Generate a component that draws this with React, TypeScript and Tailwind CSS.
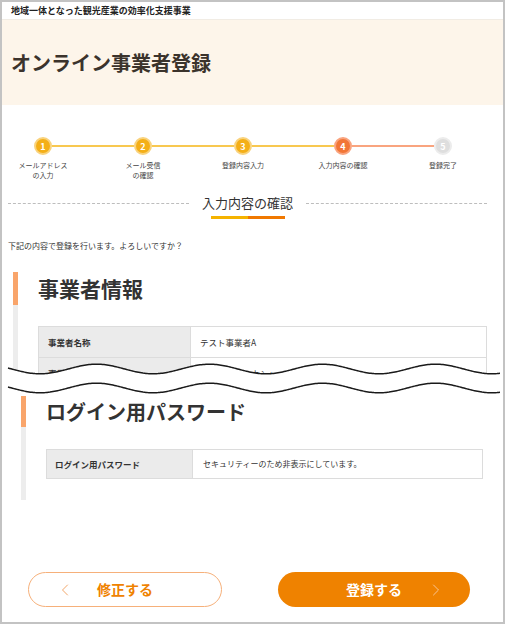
import React from 'react';
import { ChevronLeft, ChevronRight } from 'lucide-react';

const steps = [
  { n: 1, label: ['メールアドレス', 'の入力'], state: 'done' },
  { n: 2, label: ['メール受信', 'の確認'], state: 'done' },
  { n: 3, label: ['登録内容入力'], state: 'done' },
  { n: 4, label: ['入力内容の確認'], state: 'current' },
  { n: 5, label: ['登録完了'], state: 'todo' },
];

// line colour between step i and i+1
const segColor = (i: number) => (i >= 3 ? 'bg-[#f9a47f]' : 'bg-[#f8c850]');

const wavePoints = (c: number, a: number) => {
  const pts: string[] = [];
  for (let x = 8; x <= 501; x += 1.5) {
    const y = c - a * Math.cos((2 * Math.PI * (x - 96.5)) / 113);
    pts.push(`${x.toFixed(1)},${y.toFixed(2)}`);
  }
  return pts;
};

const BreakLines: React.FC = () => {
  const top = wavePoints(369, 4.8);
  const bottom = wavePoints(388, 4.8);
  const fill = `M${top.join(' L')} L${[...bottom].reverse().join(' L')} Z`;
  return (
    <svg
      className="relative block -mt-[17px] w-[501px] h-[35px]"
      viewBox="2 361 501 35"
      fill="none"
    >
      <path d={fill} fill="#ffffff" />
      <path d={`M${top.join(' L')}`} stroke="#1a1a1a" strokeWidth="1.5" />
      <path d={`M${bottom.join(' L')}`} stroke="#1a1a1a" strokeWidth="1.5" />
    </svg>
  );
};

const Stepper: React.FC = () => (
  <div className="-ml-[9px] mt-[32px] grid grid-cols-[repeat(5,100px)]">
    {steps.map((s, i) => {
      const circle =
        s.state === 'done'
          ? 'bg-[#f4af17] border-[#f9d37e]'
          : s.state === 'current'
          ? 'bg-[#f27636] border-[#f9a47f]'
          : 'bg-[#dedede] border-[#ececec]';
      return (
        <div key={s.n} className="flex flex-col items-center">
          <div className="flex w-full items-center">
            <div className={`h-[2px] flex-1 ${i === 0 ? '' : segColor(i - 1)}`} />
            <div
              className={`flex h-[18px] w-[18px] items-center justify-center rounded-full border-2 text-[9px] font-bold leading-none text-white ${circle}`}
            >
              {s.n}
            </div>
            <div className={`h-[2px] flex-1 ${i === steps.length - 1 ? '' : segColor(i)}`} />
          </div>
          <div className="mt-[5px] text-center text-[7px] leading-[10px] text-[#444]">
            {s.label.map((l) => (
              <div key={l}>{l}</div>
            ))}
          </div>
        </div>
      );
    })}
  </div>
);

const App: React.FC = () => {
  return (
    <div className="font-['Noto_Sans_CJK_JP','Noto_Sans',sans-serif] text-[#333]">
      <div className="flex h-[624px] w-[505px] flex-col border-2 border-[#c3c3c3] bg-white">
        {/* site bar */}
        <div className="flex h-[18px] items-center border-b border-[#f1ece4] pl-[9px] text-[9px] font-bold text-[#222]">
          地域一体となった観光産業の効率化支援事業
        </div>

        {/* page header */}
        <div className="flex h-[85px] items-center bg-[#fdf5ea] pl-[9px]">
          <h1 className="text-[20px] font-bold leading-none text-[#3b332c]">
            オンライン事業者登録
          </h1>
        </div>

        <Stepper />

        {/* section title */}
        <div className="mt-[14px] flex items-start pl-[6px] pr-[16px]">
          <div className="mt-[9px] flex-1 border-t border-dashed border-[#bdbdbd]" />
          <div className="flex flex-col items-center px-[13px]">
            <span className="text-[13px] leading-[18px] text-[#333]">入力内容の確認</span>
            <div className="mt-[4px] flex h-[3px] w-[74px]">
              <div className="w-1/2 bg-[#f5b300]" />
              <div className="w-1/2 bg-[#f07800]" />
            </div>
          </div>
          <div className="mt-[9px] flex-1 border-t border-dashed border-[#bdbdbd]" />
        </div>

        <p className="mt-[21px] pl-[6px] text-[8px] leading-[12px] text-[#333]">
          下記の内容で登録を行います。よろしいですか？
        </p>

        {/* section 1, cut off by the break */}
        <div className="ml-[11px] mt-[20px] h-[106px] overflow-hidden">
          <div className="flex">
            <div className="flex w-[5px] flex-col">
              <div className="h-[33px] bg-[#f9a56b]" />
              <div className="h-[200px] bg-[#ededed]" />
            </div>
            <div className="pl-[20px]">
              <h2 className="mt-[2px] text-[21px] font-bold leading-[28px] text-[#333]">事業者情報</h2>
              <div className="mt-[24px] w-[449px] border border-[#dcdcdc] text-[8.5px]">
                <div className="flex h-[31px] border-b border-[#dcdcdc]">
                  <div className="flex w-[152px] items-center border-r border-[#dcdcdc] bg-[#ebebeb] pl-[9px] font-bold">
                    事業者名称
                  </div>
                  <div className="flex items-center pl-[9px]">テスト事業者A</div>
                </div>
                <div className="flex h-[31px] border-b border-[#dcdcdc]">
                  <div className="flex w-[152px] items-center border-r border-[#dcdcdc] bg-[#ebebeb] pl-[9px] font-bold">
                    事業者名称（カナ）
                  </div>
                  <div className="flex items-center pl-[9px]">テストジギョウシャ</div>
                </div>
              </div>
            </div>
          </div>
        </div>

        <BreakLines />

        {/* section 2 */}
        <div className="ml-[19px] flex">
          <div className="flex w-[5px] flex-col">
            <div className="h-[31px] bg-[#f9a56b]" />
            <div className="flex-1 bg-[#ededed]" />
          </div>
          <div className="pb-[21px] pl-[20px]">
            <h2 className="mt-[3px] text-[20px] font-bold leading-[26px] text-[#333]">ログイン用パスワード</h2>
            <div className="mt-[24px] flex h-[30px] w-[437px] border border-[#dcdcdc] text-[8px]">
              <div className="flex w-[146px] items-center border-r border-[#dcdcdc] bg-[#ebebeb] pl-[8px] text-[8.5px] font-bold">
                ログイン用パスワード
              </div>
              <div className="flex items-center pl-[10px]">セキュリティーのため非表示にしています。</div>
            </div>
          </div>
        </div>

        {/* actions */}
        <div className="ml-[26px] mt-[72px] flex gap-[56px]">
          <button className="relative flex h-[35px] w-[194px] items-center justify-center rounded-full border border-[#f6b07a] bg-white text-[14px] font-bold text-[#ef8200]">
            <ChevronLeft className="absolute left-[26px] top-1/2 -translate-y-1/2 text-[#f3a76a]" size={20} strokeWidth={1.2} />
            修正する
          </button>
          <button className="relative flex h-[35px] w-[192px] items-center justify-center rounded-full bg-[#ef8200] text-[14px] font-bold text-white">
            登録する
            <ChevronRight className="absolute right-[24px] top-1/2 -translate-y-1/2 text-[#f9c595]" size={20} strokeWidth={1.2} />
          </button>
        </div>
      </div>
    </div>
  );
};

export default App;
